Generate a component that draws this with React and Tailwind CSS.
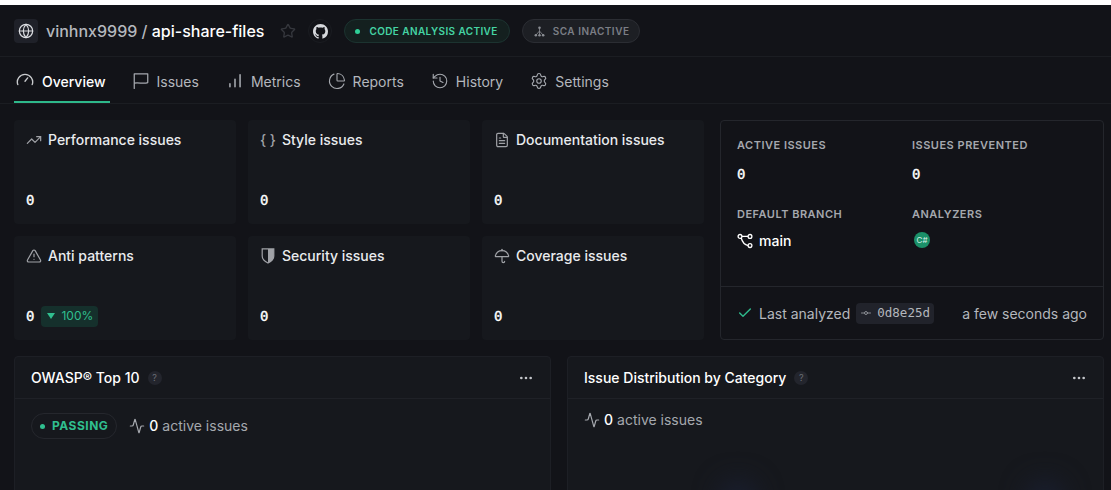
import React from 'react';
import {
  Globe, Star, History, Settings, TrendingUp, TriangleAlert, FileText,
  Umbrella, Check, GitCommitHorizontal, Activity, Ellipsis, ChartPie,
} from 'lucide-react';

const sans = { fontFamily: 'Inter, sans-serif' };

function GaugeIcon({ className }) {
  return (
    <svg viewBox="0 0 16 16" fill="none" stroke="currentColor" strokeWidth="1.2" strokeLinecap="round" className={className}>
      <path d="M1.6 11.2a6.8 6.8 0 1 1 12.8 0" />
      <path d="M8 8.2l2.4-3" />
    </svg>
  );
}

function FlagIcon({ className }) {
  return (
    <svg viewBox="0 0 16 16" fill="none" stroke="currentColor" strokeWidth="1.1" strokeLinejoin="round" strokeLinecap="round" className={className}>
      <path d="M2 14.6V1.6h12v7.8c-3.9 1.6-8-.5-12 .5" />
    </svg>
  );
}

function BarsIcon({ className }) {
  return (
    <svg viewBox="0 0 16 16" fill="none" stroke="currentColor" strokeWidth="1.4" strokeLinecap="round" className={className}>
      <path d="M3.5 13v-2.5M8 13V6.5M12.5 13V2.5" />
    </svg>
  );
}

function ShieldHalf({ className }) {
  return (
    <svg viewBox="0 0 16 16" className={className}>
      <path d="M2.2.9h11.6v7.2c0 3.2-2.4 5.4-5.8 6.9-3.4-1.5-5.8-3.7-5.8-6.9z" fill="none" stroke="currentColor" strokeWidth="1.2" />
      <path d="M8 .9h5.8v7.2c0 3.2-2.4 5.4-5.8 6.9z" fill="currentColor" />
    </svg>
  );
}

function BranchIcon({ className }) {
  return (
    <svg viewBox="0 0 16 16" fill="none" stroke="currentColor" strokeWidth="1.3" className={className}>
      <circle cx="3" cy="3.4" r="1.9" />
      <circle cx="13" cy="3.4" r="1.9" />
      <circle cx="13" cy="12.6" r="1.9" />
      <path d="M4.9 3.4h6.2M4.2 5c1 3.6 3.4 6.8 6.9 7.6" />
    </svg>
  );
}

function NodesIcon({ className }) {
  return (
    <svg viewBox="0 0 12 12" className={className}>
      <path d="M6 2.5v3M6 5.5L2.2 9.8M6 5.5l3.8 4.3M6 5.5v4.3" fill="none" stroke="currentColor" strokeWidth="0.9" />
      <circle cx="6" cy="2" r="1.4" fill="currentColor" />
      <circle cx="2" cy="10" r="1.4" fill="currentColor" />
      <circle cx="6" cy="10" r="1.4" fill="currentColor" />
      <circle cx="10" cy="10" r="1.4" fill="currentColor" />
    </svg>
  );
}

function GithubMark({ className }) {
  return (
    <svg viewBox="0 0 16 16" fill="currentColor" className={className}>
      <path d="M8 0C3.58 0 0 3.58 0 8c0 3.54 2.29 6.53 5.47 7.59.4.07.55-.17.55-.38 0-.19-.01-.82-.01-1.49-2.01.37-2.53-.49-2.69-.94-.09-.23-.48-.94-.82-1.13-.28-.15-.68-.52-.01-.53.63-.01 1.08.58 1.23.82.72 1.21 1.87.87 2.33.66.07-.52.28-.87.51-1.07-1.78-.2-3.64-.89-3.64-3.95 0-.87.31-1.59.82-2.15-.08-.2-.36-1.02.08-2.12 0 0 .67-.21 2.2.82.64-.18 1.32-.27 2-.27s1.36.09 2 .27c1.53-1.04 2.2-.82 2.2-.82.44 1.1.16 1.92.08 2.12.51.56.82 1.27.82 2.15 0 3.07-1.87 3.75-3.65 3.95.29.25.54.73.54 1.48 0 1.07-.01 1.93-.01 2.2 0 .21.15.46.55.38A8.01 8.01 0 0 0 16 8c0-4.42-3.58-8-8-8z" />
    </svg>
  );
}

const tabs = [
  { label: 'Overview', icon: GaugeIcon, active: true },
  { label: 'Issues', icon: FlagIcon },
  { label: 'Metrics', icon: BarsIcon },
  { label: 'Reports', icon: ChartPie },
  { label: 'History', icon: History },
  { label: 'Settings', icon: Settings },
];

const BracesIcon = ({ className }) => (
  <span className={`${className} flex items-center justify-center whitespace-nowrap text-[14px] font-medium leading-none`}>{'{ }'}</span>
);

const cards = [
  { label: 'Performance issues', icon: TrendingUp },
  { label: 'Style issues', icon: BracesIcon },
  { label: 'Documentation issues', icon: FileText },
  { label: 'Anti patterns', icon: TriangleAlert, delta: '100%' },
  { label: 'Security issues', icon: ShieldHalf },
  { label: 'Coverage issues', icon: Umbrella },
];

function Zero() {
  return <span className="font-['DejaVu_Sans_Mono',monospace] text-[14px] leading-5 text-white [-webkit-text-stroke:0.35px_white]">0</span>;
}

function IssueCard({ label, icon: Icon, delta }) {
  return (
    <div className="h-[104px] rounded-[4px] bg-[#16181d] px-3 pt-[10px]">
      <div className="flex h-5 items-center gap-[6px]">
        <Icon className="h-4 w-4 shrink-0 text-[#a0a2a7]" strokeWidth={1.8} />
        <span className="text-[14px] font-medium leading-5 text-[#e9ebee]">{label}</span>
      </div>
      <div className="mt-[39px] flex h-[22px] items-center gap-[7px]">
        <Zero />
        {delta && (
          <span className="flex h-[21px] items-center gap-[6px] rounded-[4px] bg-[#15302c] pl-[6px] pr-[5px] text-[12px] text-[#30bf8f]">
            <span className="h-0 w-0 border-x-[4px] border-t-[6px] border-x-transparent border-t-[#30bf8f]" />
            {delta}
          </span>
        )}
      </div>
    </div>
  );
}

function Stat({ title, children }) {
  return (
    <div>
      <div className="text-[11px] font-semibold leading-4 tracking-[0.5px] text-[#a5a8ae]">{title}</div>
      <div className="mt-2">{children}</div>
    </div>
  );
}

function ActiveIssues() {
  return (
    <div className="flex items-center gap-1 text-[14px] leading-5 text-[#a5a8ae]">
      <Activity className="h-4 w-4 text-[#a5a8ae]" strokeWidth={1.8} />
      <span className="font-medium text-white">0</span>
      <span>active issues</span>
    </div>
  );
}

function Panel({ title, children, glow }) {
  return (
    <div className="relative h-[200px] overflow-hidden rounded-[4px] border border-[#1d1f25] bg-[#16181d]">
      <div className="flex h-[42px] items-center justify-between border-b border-[#1f2127] px-4">
        <div className="flex items-center gap-2">
          <span className="text-[14px] font-medium text-white">{title}</span>
          <span className="flex h-[14px] w-[14px] items-center justify-center rounded-full bg-[#23252d] text-[9px] text-[#6b6e75]">?</span>
        </div>
        <Ellipsis className="h-4 w-4 text-[#c4c6ca]" />
      </div>
      <div className="px-4 pt-[11px]">{children}</div>
      {glow && (
        <>
          <div className="absolute left-[150px] top-[122px] h-[40px] w-[40px] rounded-full bg-[#191e2e] blur-md" />
          <div className="absolute left-[457px] top-[122px] h-[40px] w-[40px] rounded-full bg-[#191e2e] blur-md" />
        </>
      )}
    </div>
  );
}

export default function App() {
  return (
    <div style={sans} className="h-[490px] w-[1111px] overflow-hidden bg-[#121318]">
      <div className="h-[5px] bg-white" />

      <header className="flex h-[52px] items-center border-b border-[#1b1d22] pl-[14px] pt-px">
        <div className="flex h-6 w-6 items-center justify-center rounded-[4px] bg-[#1f2129]">
          <Globe className="h-4 w-4 text-[#dcdee2]" strokeWidth={1.8} />
        </div>
        <div className="ml-2 text-[16px] font-medium text-[#b4b7bd]">
          vinhnx9999 / <span className="text-white">api-share-files</span>
        </div>
        <Star className="ml-4 h-4 w-4 text-[#35373d]" strokeWidth={2} />
        <div className="ml-3 flex h-6 w-6 items-center justify-center rounded-full border border-[#1a1c21]">
          <GithubMark className="h-[15px] w-[15px] text-[#d6d8dc]" />
        </div>
        <div className="ml-3 flex h-6 items-center gap-[9px] rounded-full border border-[#1c3330] bg-[#14201f] pl-[10px] pr-[11px] text-[10px] font-semibold tracking-[0.4px] text-[#45d4a4]">
          <span className="h-[5px] w-[5px] rounded-full bg-[#2fcf97]" />
          CODE ANALYSIS ACTIVE
        </div>
        <div className="ml-3 flex h-6 items-center gap-[8px] rounded-full border border-[#2b2d33] bg-[#1d1f24] pl-[11px] pr-[10px] text-[10px] font-semibold tracking-[0.5px] text-[#7b7e85]">
          <NodesIcon className="h-[11px] w-[11px] text-[#8a8d93]" />
          SCA INACTIVE
        </div>
      </header>

      <nav className="flex h-[47px] items-stretch gap-[23px] border-b border-[#1b1d22] pl-[14px]">
        {tabs.map((tab) => (
          <div
            key={tab.label}
            className={`flex items-center border-b-2 pt-1 text-[14px] ${tab.active ? 'mr-[-3px] gap-2 border-[#2eb88a] pl-[2px] pr-[4px] font-medium text-white' : 'gap-[7px] border-transparent px-[2px] text-[#b4b7bd]'}`}
          >
            <tab.icon className={`h-[18px] w-[18px] ${tab.active ? 'text-[#c8cacd]' : 'text-[#a5a8ae]'}`} strokeWidth={1.5} />
            {tab.label}
          </div>
        ))}
      </nav>

      <main className="pl-[14px] pr-[7px] pt-4">
        <div className="flex gap-4">
          <div className="grid w-[690px] shrink-0 grid-cols-3 gap-3">
            {cards.map((card) => (
              <IssueCard key={card.label} {...card} />
            ))}
          </div>
          <div className="flex h-[220px] w-[384px] shrink-0 flex-col rounded-[4px] border border-[#24262c] bg-[#121318]">
            <div className="grid flex-1 grid-cols-2 auto-rows-[69px] content-start px-4 pt-4">
              <Stat title="ACTIVE ISSUES"><Zero /></Stat>
              <Stat title="ISSUES PREVENTED"><Zero /></Stat>
              <Stat title="DEFAULT BRANCH">
                <div className="flex items-center gap-[6px] pt-px text-[14px] font-medium leading-5 text-white">
                  <BranchIcon className="h-4 w-4" />
                  main
                </div>
              </Stat>
              <Stat title="ANALYZERS">
                <div className="ml-[2px] mt-[10px] flex h-4 w-4 items-center justify-center rounded-full bg-[#1b9068] text-[8px] text-[#d7efe6]">C#</div>
              </Stat>
            </div>
            <div className="flex h-[53px] items-center justify-between border-t border-[#24262c] px-4">
              <div className="flex items-center gap-[6px] text-[14px] text-[#b4b7bd]">
                <Check className="h-4 w-4 text-[#2eb88a]" strokeWidth={2.2} />
                Last analyzed
                <span className="flex h-[21px] items-center gap-[5px] rounded-[4px] bg-[#21232b] px-1 font-['DejaVu_Sans_Mono',monospace] text-[12.5px] text-[#b4b7bd]">
                  <GitCommitHorizontal className="h-3 w-3 text-[#8a8d93]" strokeWidth={2} />
                  0d8e25d
                </span>
              </div>
              <span className="text-[14px] text-[#b4b7bd]">a few seconds ago</span>
            </div>
          </div>
        </div>

        <div className="mt-4 grid grid-cols-[537px_537px] gap-4">
          <Panel title="OWASP® Top 10">
            <div className="flex items-center gap-3 pt-[3px]">
              <div className="flex h-[26px] items-center gap-[7px] rounded-full border border-[#25272d] px-2 text-[12px] font-bold tracking-[0.5px] text-[#30bf8f]">
                <span className="h-[5px] w-[5px] rounded-full bg-[#30bf8f]" />
                PASSING
              </div>
              <ActiveIssues />
            </div>
          </Panel>
          <Panel title="Issue Distribution by Category" glow>
            <ActiveIssues />
          </Panel>
        </div>
      </main>
    </div>
  );
}
